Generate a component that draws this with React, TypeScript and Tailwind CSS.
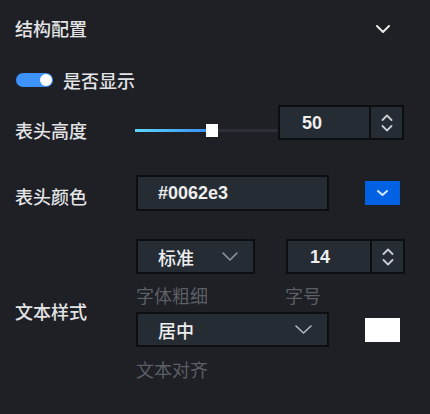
import React from "react";

const Chevron = ({ w, h, color, sw = 2 }: { w: number; h: number; color: string; sw?: number }) => (
  <svg width={w} height={h} viewBox={`0 0 ${w} ${h}`} fill="none">
    <path d={`M1 1 L${w / 2} ${h - 1} L${w - 1} 1`} stroke={color} strokeWidth={sw} strokeLinecap="round" strokeLinejoin="round" />
  </svg>
);

const Spinner = () => (
  <div className="w-[33px] h-full border-l-2 border-[#0d0e10] flex flex-col items-center justify-center gap-[4px]">
    <svg width="12" height="7" viewBox="0 0 12 7" fill="none">
      <path d="M1.5 6 L6 1.5 L10.5 6" stroke="#c9ccd1" strokeWidth="1.8" strokeLinecap="round" strokeLinejoin="round" />
    </svg>
    <svg width="12" height="7" viewBox="0 0 12 7" fill="none">
      <path d="M1.5 1 L6 5.5 L10.5 1" stroke="#c9ccd1" strokeWidth="1.8" strokeLinecap="round" strokeLinejoin="round" />
    </svg>
  </div>
);

const NumberBox = ({ value, w }: { value: string; w: string }) => (
  <div className={`${w} h-[35px] bg-[#262c34] border-2 border-[#0d0e10] flex items-stretch`}>
    <div className="flex-1 flex items-center pl-[22px] text-[18px] font-bold text-[#eeeeee] leading-none" style={{ fontFamily: '"Liberation Sans", Arial, sans-serif' }}>
      {value}
    </div>
    <Spinner />
  </div>
);

export default function App() {
  return (
    <div
      className="w-[430px] h-[414px] bg-[#1e2025] px-[15px] text-[#e3e4e6] text-[18px] leading-[24px] font-medium overflow-hidden"
      style={{ fontFamily: '"Noto Sans CJK SC", "Noto Sans", sans-serif' }}
    >
      {/* header */}
      <div className="h-[56px] flex items-center justify-between">
        <span>结构配置</span>
        <div className="mr-[25px] mt-[2px]">
          <Chevron w={14} h={8} color="#e6e6e6" sw={2} />
        </div>
      </div>

      {/* toggle */}
      <div className="h-[48px] flex items-center gap-[10px]">
        <div className="ml-[1px] w-[37px] h-[14px] rounded-full bg-[#3d93fb] flex items-center justify-end pr-[1px]">
          <div className="w-[12px] h-[12px] rounded-full bg-white" />
        </div>
        <span>是否显示</span>
      </div>

      {/* slider */}
      <div className="mt-[1px] flex items-start">
        <div className="w-[120px] mt-[13px]">表头高度</div>
        <div className="relative w-[143px] h-[13px] mt-[19px]">
          <div className="absolute left-0 right-0 top-[5px] h-[3px] bg-[#2b3038]" />
          <div className="absolute left-0 w-[76px] top-[5px] h-[3px] bg-gradient-to-r from-[#5fd6f7] to-[#3a8cf5]" />
          <div className="absolute left-[71px] top-0 w-[12px] h-[13px] bg-white" />
        </div>
        <NumberBox value="50" w="w-[126px]" />
      </div>

      {/* color */}
      <div className="mt-[33px] flex items-start">
        <div className="w-[121px] mt-[9px]">表头颜色</div>
        <div className="w-[193px] h-[36px] bg-[#262c34] border-2 border-[#0d0e10] flex items-center pl-[20px] text-[18px] text-[#eeeeee] font-bold" style={{ fontFamily: '"Liberation Sans", Arial, sans-serif' }}>
          #0062e3
        </div>
        <div className="ml-[36px] mt-[6px] w-[35px] h-[24px] bg-[#0062e3] flex items-center justify-center">
          <Chevron w={11} h={6} color="#d6e6ff" sw={2} />
        </div>
      </div>

      {/* text style */}
      <div className="mt-[28px] flex items-start">
        <div className="w-[121px] mt-[60px]">文本样式</div>
        <div className="flex flex-col">
          <div className="flex gap-[31px]">
            <div className="w-[119px] h-[35px] bg-[#262c34] border-2 border-[#0d0e10] flex items-center justify-between pl-[20px] pr-[15px] text-[#eeeeee]">
              <span>标准</span>
              <Chevron w={16} h={9} color="#8e949c" sw={1.6} />
            </div>
            <NumberBox value="14" w="w-[119px]" />
          </div>
          <div className="mt-[9px] flex text-[#5b5f66] font-normal">
            <div className="w-[149px]">字体粗细</div>
            <div>字号</div>
          </div>
          <div className="mt-[5px] flex items-center">
            <div className="w-[193px] h-[35px] bg-[#262c34] border-2 border-[#0d0e10] flex items-center justify-between pl-[20px] pr-[15px] text-[#eeeeee]">
              <span>居中</span>
              <Chevron w={17} h={9} color="#b4b8be" sw={1.6} />
            </div>
            <div className="ml-[36px] w-[35px] h-[24px] bg-white" />
          </div>
          <div className="mt-[10px] text-[#5b5f66] font-normal">文本对齐</div>
        </div>
      </div>
    </div>
  );
}
